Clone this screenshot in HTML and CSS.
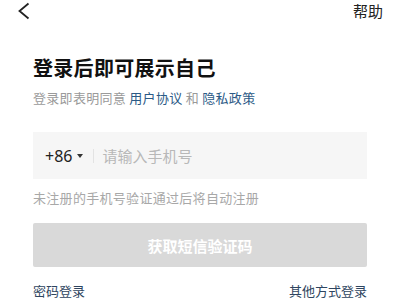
FILE: index.html
```html
<!DOCTYPE html>
<html lang="zh">
<head>
<meta charset="utf-8">
<link rel="stylesheet" href="styles.css">
</head>
<body>
<div class="page">
  <header class="topbar">
    <svg class="back" width="13" height="18" viewBox="0 0 13 18"><path d="M11.5 1.5 L2.5 9 L11.5 16.5" fill="none" stroke="#222" stroke-width="1.8"/></svg>
    <span class="help">帮助</span>
  </header>
  <main class="content">
    <h1 class="title">登录后即可展示自己</h1>
    <p class="agree">登录即表明同意 <span class="link">用户协议</span> 和 <span class="link">隐私政策</span></p>
    <div class="phone">
      <span class="code">+86</span>
      <span class="tri"></span>
      <span class="divider"></span>
      <span class="placeholder">请输入手机号</span>
    </div>
    <p class="hint">未注册的手机号验证通过后将自动注册</p>
    <div class="btn">获取短信验证码</div>
    <div class="bottom">
      <span class="alt">密码登录</span>
      <span class="alt">其他方式登录</span>
    </div>
  </main>
</div>
</body>
</html>
```

FILE: styles.css
```css
html, body {
  margin: 0;
  padding: 0;
  background: #fff;
}
body {
  font-family: "Noto Sans CJK SC", "Noto Sans", sans-serif;
  color: #222;
  width: 400px;
  height: 300px;
  overflow: hidden;
}
.page {
  display: flex;
  flex-direction: column;
}
.topbar {
  display: flex;
  justify-content: space-between;
  align-items: center;
  height: 22px;
  padding: 0 17px 0 17px;
}
.back {
  display: block;
  margin-top: -1px;
}
.help {
  font-size: 15px;
  line-height: 22px;
  color: #222;
}
.content {
  padding: 0 33px;
  display: flex;
  flex-direction: column;
}
.title {
  margin: 32px 0 0 0;
  font-size: 20px;
  line-height: 28px;
  font-weight: 700;
  color: #111;
  letter-spacing: 0.3px;
}
.agree {
  margin: 7px 0 0 0;
  font-size: 13px;
  line-height: 18px;
  color: #9a9a9a;
  letter-spacing: 0.3px;
}
.link {
  color: #2b5a86;
}
.phone {
  margin-top: 25px;
  height: 47px;
  background: #f6f6f6;
  display: flex;
  align-items: center;
  padding-left: 12px;
}
.code {
  font-family: "Noto Sans", sans-serif;
  font-size: 16px;
  color: #222;
}
.tri {
  width: 0;
  height: 0;
  border-left: 3px solid transparent;
  border-right: 3px solid transparent;
  border-top: 4px solid #333;
  margin-left: 5px;
}
.divider {
  width: 1px;
  height: 14px;
  background: #e3e3e3;
  margin-left: 10px;
}
.placeholder {
  margin-left: 8px;
  font-size: 15px;
  color: #b8b8b8;
}
.hint {
  margin: 10px 0 0 0;
  font-size: 13px;
  line-height: 18px;
  color: #a8a8a8;
  letter-spacing: 0.3px;
}
.btn {
  margin-top: 16px;
  height: 44px;
  background: #d9d9d9;
  color: #fff;
  font-size: 15px;
  font-weight: 700;
  display: flex;
  align-items: center;
  justify-content: center;
  border-radius: 2px;
}
.bottom {
  margin-top: 15px;
  display: flex;
  justify-content: space-between;
}
.alt {
  font-size: 13px;
  line-height: 18px;
  color: #2e4560;
}
```
